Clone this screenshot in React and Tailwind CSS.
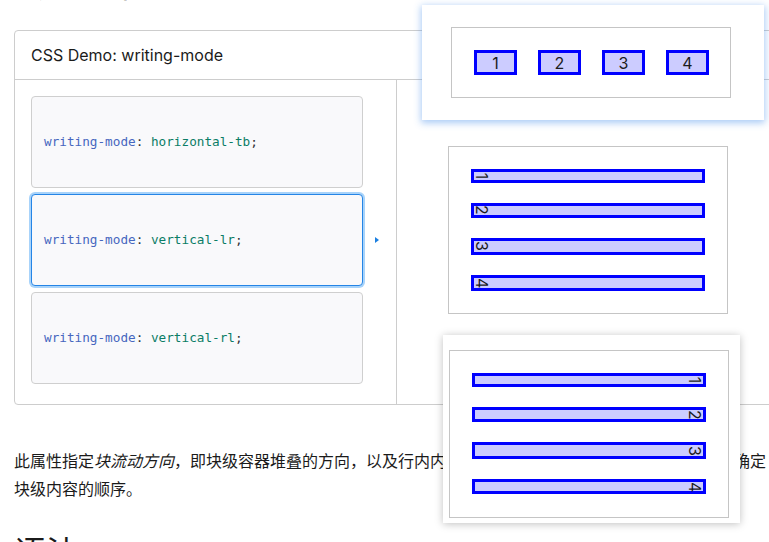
const rows = [
  { value: 'horizontal-tb', active: false },
  { value: 'vertical-lr', active: true },
  { value: 'vertical-rl', active: false },
];

const barHeights = ['h-[14px]', 'h-[15px]', 'h-[17px]', 'h-[16px]'];
const barHeightsRl = ['h-[14px]', 'h-[15px]', 'h-[17px]', 'h-[15px]'];

function CodeRow({ value, active }) {
  return (
    <div
      className={
        active
          ? 'flex h-[92px] w-[332px] items-center rounded-[4px] border border-[#2585e6] bg-[#f9f9fb] pl-3 ring-2 ring-[#a8d3fa]'
          : 'flex h-[92px] w-[332px] items-center rounded-[4px] border border-[#cfcfcf] bg-[#f9f9fb] pl-3'
      }
    >
      <code className="font-['DejaVu_Sans_Mono',monospace] text-[12.7px] whitespace-pre">
        <span className="text-[#4767bf]">writing-mode</span>
        <span className="text-[#333]">: </span>
        <span className="text-[#0b7d66]">{value}</span>
        <span className="text-[#333]">;</span>
      </code>
    </div>
  );
}

function VerticalBars({ heights, end }) {
  return (
    <div className="flex flex-col gap-5">
      {heights.map((h, i) => (
        <div
          key={i}
          className={`flex ${h} items-center border-[3px] border-[#0000ff] bg-[#ccccff] ${end ? 'justify-end pr-[3px]' : 'justify-start pl-[3px]'}`}
        >
          <span className="inline-block w-[10px] rotate-90 text-center text-[16px] leading-none">{i + 1}</span>
        </div>
      ))}
    </div>
  );
}

export default function App() {
  return (
    <div className="relative h-[542px] w-[769px] overflow-hidden bg-white font-['Inter','Noto_Sans_CJK_SC',sans-serif] text-[#1b1b1b]">
      <div className="pl-[14px]">
        <h2 className="-mt-[36px] font-['Noto_Sans_CJK_SC',sans-serif] text-[32px] leading-[1.2]">尝试一下</h2>

        <section className="mt-[27.6px] w-[820px] rounded-[4px] border border-[#cdcdcd]">
          <header className="flex h-[49px] items-center border-b border-[#cdcdcd] pl-4 text-[16px]">
            CSS Demo: writing-mode
          </header>
          <div className="flex">
            <div className="flex w-[382px] items-center border-r border-[#cdcdcd] pt-4 pb-5 pl-4">
              <div className="flex flex-col gap-[6px]">
                {rows.map((r) => (
                  <CodeRow key={r.value} {...r} />
                ))}
              </div>
              <div className="ml-[12px] h-0 w-0 border-y-[3px] border-l-[4px] border-y-transparent border-l-[#1b7fe0]" />
            </div>
            <div className="flex-1 pt-[66px] pl-[51px]">
              <div className="h-[168px] w-[280px] border border-[#c5c5c5] px-[22px] pt-[22px]">
                <VerticalBars heights={barHeights} />
              </div>
            </div>
          </div>
        </section>

        <p className="mt-[41px] w-[760px] font-['Noto_Sans_CJK_SC',sans-serif] text-[16px] leading-[28px]">
          此属性指定<em>块流动方向</em>，即块级容器堆叠的方向，以及行内内容在块级容器中的流动方向。因此，它也确定块级内容的顺序。
        </p>

        <h2 className="mt-[29px] font-['Noto_Sans_CJK_SC',sans-serif] text-[32px] leading-[1.2]">语法</h2>
      </div>

      {/* floating output: horizontal-tb */}
      <div className="absolute top-[5px] left-[422px] h-[115px] w-[342px] bg-white pt-[22px] pl-[29px] shadow-[0_2px_7px_1px_rgba(66,140,235,0.45)]">
        <div className="flex h-[71px] w-[280px] items-start gap-[21px] border border-[#c5c5c5] pt-[22px] pl-[22px]">
          {[1, 2, 3, 4].map((n) => (
            <div
              key={n}
              className="flex h-[25px] w-[43px] items-center justify-center border-[3px] border-[#0000ff] bg-[#ccccff] text-[16px] leading-none"
            >
              {n}
            </div>
          ))}
        </div>
      </div>

      {/* floating output: vertical-rl */}
      <div className="absolute top-[335px] left-[443px] h-[188px] w-[297px] bg-white pt-[15px] pl-[6px] shadow-[0_1px_8px_rgba(0,0,0,0.25)]">
        <div className="h-[168px] w-[280px] border border-[#c5c5c5] px-[22px] pt-[22px]">
          <VerticalBars heights={barHeightsRl} end />
        </div>
      </div>
    </div>
  );
}
